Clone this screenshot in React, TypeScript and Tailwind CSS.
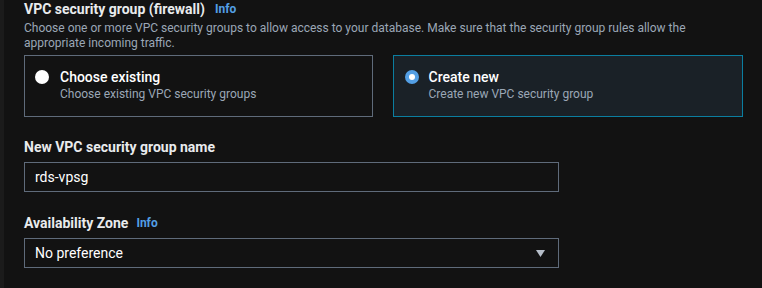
function Radio({ checked }: { checked: boolean }) {
  if (checked) {
    return (
      <span className="mt-[2px] flex h-[14px] w-[14px] shrink-0 items-center justify-center rounded-full bg-[#539fe5]">
        <span className="h-[6px] w-[6px] rounded-full bg-white" />
      </span>
    );
  }
  return <span className="mt-[2px] h-[14px] w-[14px] shrink-0 rounded-full bg-white" />;
}

function Choice({ title, desc, checked }: { title: string; desc: string; checked: boolean }) {
  return (
    <div
      className={
        checked
          ? 'flex h-[62px] flex-1 gap-[10px] border border-[#0b7ea0] bg-[#1a2127] px-[11px] pt-[12px]'
          : 'flex h-[62px] flex-1 gap-[11px] border border-[#5f6b7a] bg-[#121212] px-[10px] pt-[12px]'
      }
    >
      <Radio checked={checked} />
      <div className="flex flex-col">
        <span className="text-[14px] leading-[18px] font-medium text-white">{title}</span>
        <span className="text-[12px] leading-[17px] text-[#9ba7b6]">{desc}</span>
      </div>
    </div>
  );
}

export default function App() {
  return (
    <div
      className="flex h-[288px] w-[762px] bg-[#121212]"
      style={{ fontFamily: 'Roboto, "Noto Sans", sans-serif' }}
    >
      <div className="w-[4px] bg-[#1b1b1b]" />
      <div className="flex flex-1 flex-col pl-[20px] pr-[19px]">
        {/* Security group */}
        <div className="flex items-center gap-[10px]">
          <h2 className="text-[14px] leading-[18px] font-bold text-[#e9ebed]">VPC security group (firewall)</h2>
          <a className="text-[12px] font-bold text-[#539fe5]">Info</a>
        </div>
        <p className="mt-[3px] text-[12px] leading-[15px] text-[#9ba7b6]">
          Choose one or more VPC security groups to allow access to your database. Make sure that the security group rules
          allow the appropriate incoming traffic.
        </p>
        <div className="mt-[4px] flex gap-[20px]">
          <Choice title="Choose existing" desc="Choose existing VPC security groups" checked={false} />
          <Choice title="Create new" desc="Create new VPC security group" checked={true} />
        </div>

        {/* Name */}
        <label className="mt-[21px] text-[14px] leading-[18px] font-bold text-[#e9ebed]">New VPC security group name</label>
        <div className="mt-[6px] flex h-[30px] w-[535px] items-center border border-[#5f6b7a] px-[10px] text-[14px] text-white">
          rds-vpsg
        </div>

        {/* AZ */}
        <div className="mt-[22px] flex items-center gap-[8px]">
          <span className="text-[14px] leading-[18px] font-bold text-[#e9ebed]">Availability Zone</span>
          <a className="text-[12px] font-bold text-[#539fe5]">Info</a>
        </div>
        <div className="mt-[6px] flex h-[30px] w-[535px] items-center justify-between border border-[#5f6b7a] pl-[10px] pr-[13px] text-[14px] text-white">
          <span>No preference</span>
          <svg width="9" height="7" viewBox="0 0 9 7">
            <path d="M0 0 H9 L4.5 7 Z" fill="#b6bec9" />
          </svg>
        </div>
      </div>
    </div>
  );
}
